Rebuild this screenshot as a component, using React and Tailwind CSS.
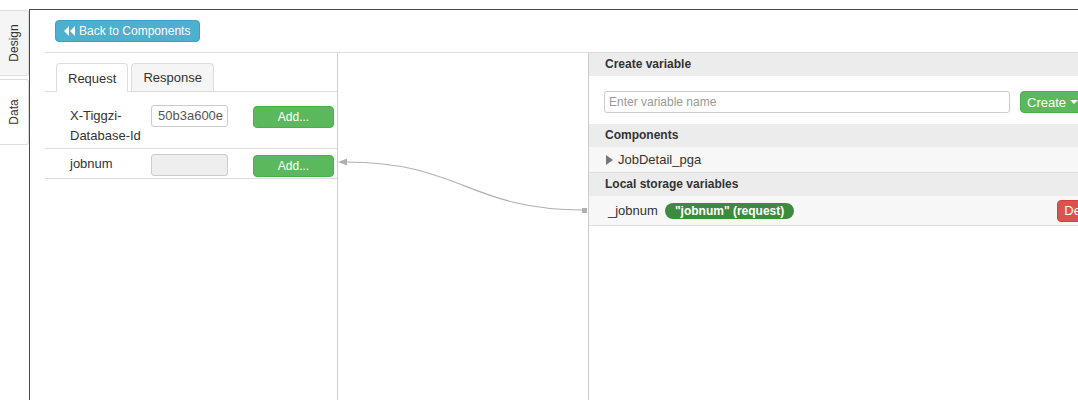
import React from 'react';

const font = { fontFamily: '"Liberation Sans", Arial, sans-serif' };

function BackIcon() {
  return (
    <svg width="11" height="10" viewBox="0 0 11 10" className="mr-[4px]">
      <path d="M5 0 L0 5 L5 10 Z M11 0 L6 5 L11 10 Z" fill="white" />
    </svg>
  );
}

function AddButton() {
  return (
    <button className="w-[81px] h-[22px] rounded-[4px] bg-[#5cb85c] border border-[#4cae4c] text-white text-[12px] leading-none">
      Add...
    </button>
  );
}

function ParamRow({ label, value, tall }) {
  return (
    <div className={`flex items-start border-b border-[#dddddd] pl-[25px] ${tall ? 'pt-[13px] h-[57px]' : 'pt-[4px] h-[30px]'}`}>
      <div className={`w-[81px] text-[13px] text-[#333] leading-[20px] ${tall ? 'mt-[1px]' : 'mt-[1px]'}`}>{label}</div>
      <div className={`w-[77px] h-[22px] rounded-[3px] border border-[#cccccc] text-[13px] text-[#555] px-[6px] leading-[20px] ${value ? 'bg-white' : 'bg-[#eeeeee]'} ${tall ? '' : 'mt-[1px]'}`}>
        {value}
      </div>
      <div className={`ml-[25px] ${tall ? '-mt-[1px]' : ''}`}>
        <AddButton />
      </div>
    </div>
  );
}

function SectionHeader({ children }) {
  return (
    <div className="h-[23px] bg-[#ececec] pl-[16px] text-[12px] font-bold text-[#333] leading-[23px]">{children}</div>
  );
}

export default function App() {
  return (
    <div className="relative w-[1078px] h-[400px] overflow-hidden bg-white flex" style={font}>
      {/* side tabs */}
      <div className="w-[29px] shrink-0 pt-[10px] flex flex-col">
        <div className="h-[66px] bg-[#f5f5f5] border border-l-0 border-[#dddddd] rounded-r-[3px] flex items-center justify-center">
          <span className="-rotate-90 text-[12px] text-[#333] whitespace-nowrap">Design</span>
        </div>
        <div className="mt-[3px] h-[66px] bg-white border border-l-0 border-[#dddddd] rounded-r-[3px] flex items-center justify-center">
          <span className="-rotate-90 text-[12px] text-[#333] whitespace-nowrap">Data</span>
        </div>
      </div>

      {/* main frame */}
      <div className="mt-[9px] flex-1 border-l-[1.5px] border-t-[1.5px] border-[#4a4a4a] flex flex-col min-w-0">
        <div className="h-[42px] pl-[25px] pt-[10px]">
          <button className="h-[22px] pl-[8px] pr-[9px] rounded-[4px] bg-[#4bb1cf] border border-[#3fa0bd] text-white text-[12px] flex items-center leading-none">
            <BackIcon />
            Back to Components
          </button>
        </div>

        <div className="ml-[15px] flex-1 flex border-t border-[#dddddd] w-[1100px]">
          {/* left panel */}
          <div className="w-[293px] border-r border-[#cccccc]">
            <div className="h-[39px] flex items-end pl-[11px] border-b border-[#dddddd]">
              <div className="h-[29px] px-[11px] bg-white border border-b-0 border-[#dddddd] rounded-t-[4px] text-[13px] text-[#333] leading-[29px] -mb-px">
                Request
              </div>
              <div className="ml-[3px] h-[28px] px-[11px] bg-[#f5f5f5] border border-b-0 border-[#dddddd] rounded-t-[4px] text-[13px] text-[#333] leading-[28px]">
                Response
              </div>
            </div>
            <ParamRow label="X-Tiggzi-Database-Id" value="50b3a600e" tall />
            <ParamRow label="jobnum" value="" />
          </div>

          {/* canvas */}
          <div className="w-[251px] border-r border-[#cccccc]" />

          {/* right panel */}
          <div className="w-[540px]">
            <SectionHeader>Create variable</SectionHeader>
            <div className="h-[48px] pl-[15px] pt-[15px] flex bg-white">
              <div className="w-[406px] h-[22px] rounded-[3px] border border-[#cccccc] px-[4px] text-[12px] text-[#999] leading-[20px]">
                Enter variable name
              </div>
              <button className="ml-[10px] h-[22px] px-[6px] rounded-[4px] bg-[#5cb85c] border border-[#4cae4c] text-white text-[13px] flex items-center leading-none">
                Create
                <span className="ml-[4px] w-0 h-0 border-l-[4px] border-r-[4px] border-t-[4px] border-l-transparent border-r-transparent border-t-white" />
              </button>
            </div>
            <SectionHeader>Components</SectionHeader>
            <div className="h-[26px] bg-[#f7f7f7] border-b border-[#dddddd] pl-[17px] flex items-center text-[13px] text-[#333]">
              <span className="w-0 h-0 border-t-[5px] border-b-[5px] border-l-[7px] border-t-transparent border-b-transparent border-l-[#777] mr-[5px]" />
              JobDetail_pga
            </div>
            <SectionHeader>Local storage variables</SectionHeader>
            <div className="h-[30px] bg-[#f7f7f7] border-b border-[#dddddd] pl-[19px] flex items-center text-[13px] text-[#333]">
              <span>_jobnum</span>
              <span className="ml-[7px] h-[16px] px-[10px] rounded-full bg-[#3d8b3d] text-white text-[12px] font-bold leading-[16px]">
                "jobnum" (request)
              </span>
              <button className="ml-[263px] h-[22px] px-[6px] rounded-[4px] bg-[#d9534f] border border-[#d43f3a] text-white text-[13px] leading-none">
                Delete
              </button>
            </div>
          </div>
        </div>
      </div>

      {/* connector */}
      <svg className="absolute left-0 top-0 pointer-events-none" width="1078" height="400">
        <path d="M346 162 C 460 162, 470 210, 583 210" fill="none" stroke="#b0b0b0" strokeWidth="1.2" />
        <path d="M338 162 L347 158.5 L347 165.5 Z" fill="#b0b0b0" />
        <rect x="582" y="208" width="5" height="5" fill="#b0b0b0" />
      </svg>
    </div>
  );
}
